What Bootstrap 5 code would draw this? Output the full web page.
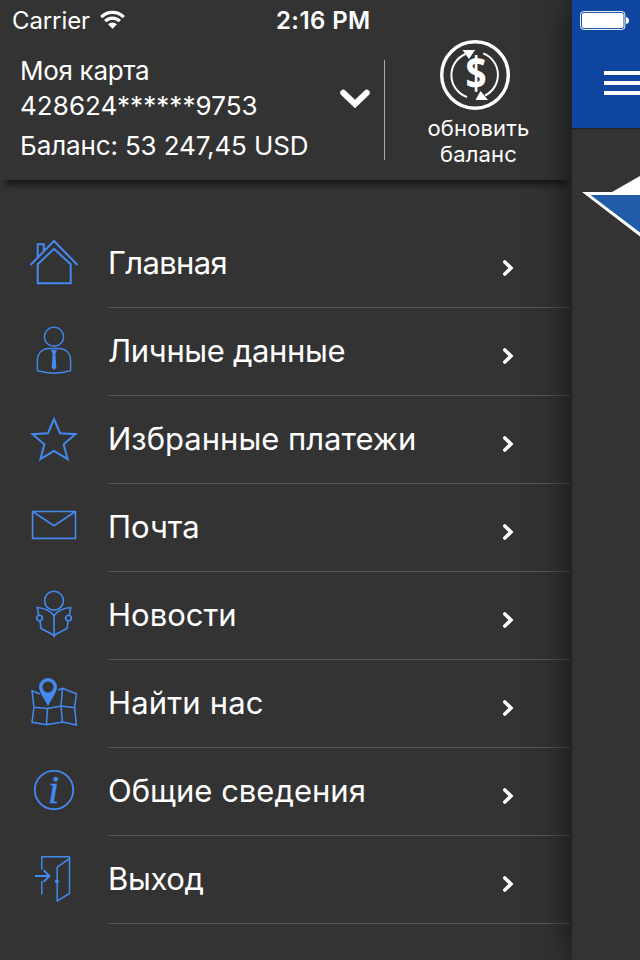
<!DOCTYPE html>
<html lang="ru">
<head>
<meta charset="utf-8">
<meta name="viewport" content="width=device-width, initial-scale=1">
<title>Меню</title>
<link rel="stylesheet" href="https://cdn.jsdelivr.net/npm/bootstrap@5.3.0/dist/css/bootstrap.min.css">
<style>
body{background:#333;color:#fff;font-family:Inter,"Liberation Sans",sans-serif}
.screen{width:640px;height:960px}
.drawer{width:572px}
.drawer-head{height:180px;background:#333;box-shadow:0 9px 7px -5px rgba(0,0,0,.62)}
.status{height:40px;line-height:42px;font-size:24px;padding-left:12px}
.status .carrier{width:87px;letter-spacing:-.1px}
.status .clock{font-weight:600;margin-left:151px;letter-spacing:.4px}
.account{font-size:26px;line-height:35px;padding:13px 0 0 20px;width:340px}
.account .holder{letter-spacing:-.3px}
.account .number{letter-spacing:.06px}
.account .balance{line-height:46px;letter-spacing:-.13px}
.toggle{width:44px;padding-top:48px}
.rule{width:1px;height:100px;margin-top:20px;background:#aaa}
.refresh{width:187px;font-size:22px;line-height:26px;letter-spacing:.15px}
.refresh svg{margin-right:8px}
.menu{padding-top:40px}
.menu-row{height:88px;color:#fff;text-decoration:none}
.menu-row .pic{width:60px;margin-left:24px;margin-right:24px;fill:none;stroke:#4489f0;stroke-width:2}
.menu-row .caption{border-bottom:1px solid #555;font-size:31px;line-height:86px;width:462px;margin-right:2px}
.menu-row .go{margin:38px 55px 0 0}
.menu-row .tight{letter-spacing:-.35px}
.menu-row .tighter{letter-spacing:-.65px}
.menu-row .loose{letter-spacing:.15px}
.side{width:68px;background:#333;box-shadow:0 0 40px rgba(0,0,0,.7)}
.side-bar{height:128px;background:#0e469f;padding-top:10px}
.burger{width:36px;margin-top:40px}
.burger span{height:4px;margin-bottom:6px;background:#fff}
svg{display:block}
</style>
</head>
<body>
<svg width="0" height="0" class="position-absolute"><symbol id="next" viewBox="0 0 14 20"><path d="M3.800 3.900L10 10l-6.200 6.100" fill="none" stroke="#fff" stroke-width="3.500" stroke-linecap="round"/></symbol></svg>
<div class="screen d-flex overflow-hidden">
  <div class="drawer flex-shrink-0">
    <header class="drawer-head position-relative">
      <div class="status d-flex text-nowrap">
        <span class="carrier">Carrier</span>
        <svg width="26" height="40" viewBox="0 0 26 40" fill="none" stroke="#fff" stroke-width="3.300"><path d="M2.200 17.200a15.800 15.800 0 0 1 22.600 0M6.200 21.200a10.200 10.200 0 0 1 14.600 0"/><path d="M13.500 28.800L9 24.300a6.400 6.400 0 0 1 9 0z" fill="#fff" stroke="none"/></svg>
        <span class="clock">2:16 PM</span>
      </div>
      <div class="d-flex text-nowrap">
        <div class="account">
          <div class="holder">Моя карта</div>
          <div class="number">428624******9753</div>
          <div class="balance">Баланс: 53 247,45 USD</div>
        </div>
        <div class="toggle"><svg width="30" height="22" viewBox="340 88 30 22"><path d="M343.200 92.800L355 104l11.800-11.200" fill="none" stroke="#fff" stroke-width="6" stroke-linecap="round"/></svg></div>
        <div class="rule"></div>
        <div class="refresh d-flex flex-column align-items-center text-center">
          <svg width="72" height="75" viewBox="439 40 72 75" fill="none" stroke="#fff">
            <circle cx="475" cy="75" r="33.300" stroke-width="3.400"/>
            <path d="M467 97a23 23 0 0 1-1.500-43M483.300 53.400A23 23 0 0 1 485 95.500" stroke-width="2"/>
            <path d="M462.500 50H475l-6 9zM488 100h-12.500l5-9z" fill="#fff" stroke="none"/>
            <text transform="translate(476 88.500) scale(.88 1.050)" text-anchor="middle" font-family="Open Sans" font-weight="700" font-size="42" letter-spacing="0" fill="#fff" stroke="none">$</text>
          </svg>
          <div>обновить</div>
          <div>баланс</div>
        </div>
      </div>
    </header>
    <nav class="menu text-nowrap">
      <a class="menu-row d-flex" href="#"><svg class="pic" height="88" viewBox="24 0 60 88"><path d="M30.500 45L54 21l23.500 24M37.700 38V24.200h6.100v6.500M37.700 44.300v19h33v-19L54 28.800z"/></svg>
        <span class="caption d-flex"><span class="tighter">Главная</span><svg class="go ms-auto" width="14" height="20"><use href="#next"/></svg></span></a>
      <a class="menu-row d-flex" href="#"><svg class="pic" height="88" viewBox="24 0 60 88"><g stroke-width="1.400"><circle cx="54" cy="28.700" r="9.600"/><path d="M49 40.500h10c7 0 11.600 5 11.600 12v10.200q-16.600 5-33.200 0V52.500c0-7 4.600-12 11.600-12z"/></g><path d="M51 42h6l-1.600 4 .9 13.800-2.300 2.200-2.300-2.200.9-13.800z" fill="#4489f0" stroke="none"/></svg>
        <span class="caption d-flex"><span class="tight">Личные данные</span><svg class="go ms-auto" width="14" height="20"><use href="#next"/></svg></span></a>
      <a class="menu-row d-flex" href="#"><svg class="pic" height="88" viewBox="24 0 60 88"><path d="M54 23l6 14.200 15.500 1L63.600 48.300l4 14.700L54 54.800 40.400 63l4-14.700L32.500 38.200l15.500-1z"/></svg>
        <span class="caption d-flex"><span>Избранные платежи</span><svg class="go ms-auto" width="14" height="20"><use href="#next"/></svg></span></a>
      <a class="menu-row d-flex" href="#"><svg class="pic" height="88" viewBox="24 0 60 88"><path d="M32.600 27.500h42.900v26.900H32.600zL54 41.700l21.500-14.200" stroke-width="1.600"/></svg>
        <span class="caption d-flex"><span>Почта</span><svg class="go ms-auto" width="14" height="20"><use href="#next"/></svg></span></a>
      <a class="menu-row d-flex" href="#"><svg class="pic" height="88" viewBox="24 0 60 88"><g stroke-width="1.600"><circle cx="54" cy="28.700" r="9.400"/><circle cx="39.500" cy="46" r="2.800"/><circle cx="68.500" cy="46" r="2.800"/><path d="M38.600 43.200l-1.200-7.700Q49 36.500 54 43.700 59 36.500 70.600 35.500l-1.200 7.700M54 43.700V64l-1.500-1.500-11.500-6-1-7.600M54 64l1.500-1.500 11.500-6 1-7.600"/></g></svg>
        <span class="caption d-flex"><span>Новости</span><svg class="go ms-auto" width="14" height="20"><use href="#next"/></svg></span></a>
      <a class="menu-row d-flex" href="#"><svg class="pic" height="88" viewBox="24 0 60 88"><path d="M40 34l-8-3.300 2 16.600-2 15 14.500 2.400 16-2.700 14 3-2-17.300 2-13.900-14-5.500-4.200 1.700M62.500 28.300L61 46l1.500 16M34 47.300l13.500 1.200L61 46l13.500 1.700M47.500 48.500l-1 16" stroke-width="1.500"/><path fill-rule="evenodd" d="M48 46.500c-1.500-5-9-13.500-9-19.500a9 9 0 0 1 18 0c0 6-7.500 14.500-9 19.500zM48 21.500a5.500 5.500 0 1 0 0 11 5.500 5.500 0 0 0 0-11z" fill="#4489f0" stroke="none"/></svg>
        <span class="caption d-flex"><span class="loose">Найти нас</span><svg class="go ms-auto" width="14" height="20"><use href="#next"/></svg></span></a>
      <a class="menu-row d-flex" href="#"><svg class="pic" height="88" viewBox="24 0 60 88"><circle cx="54" cy="42" r="19.200" stroke-width="1.800"/><text x="53.500" y="54.500" text-anchor="middle" font-family="Liberation Serif" font-style="italic" font-size="40" fill="#4489f0" stroke-width=".5">i</text></svg>
        <span class="caption d-flex"><span>Общие сведения</span><svg class="go ms-auto" width="14" height="20"><use href="#next"/></svg></span></a>
      <a class="menu-row d-flex" href="#"><svg class="pic" height="88" viewBox="24 0 60 88"><path d="M41.800 33.500V20.700h27.700v36.800L57.200 65V31.200l12.300-8.500M41.800 45v13.500" stroke-width="1.500"/><path d="M35 40h15M43.700 34.200l5.800 5.800-5.800 5.800"/><circle cx="56.800" cy="45.300" r="1.900" fill="#4489f0" stroke="none"/></svg>
        <span class="caption d-flex"><span class="tight">Выход</span><svg class="go ms-auto" width="14" height="20"><use href="#next"/></svg></span></a>
    </nav>
  </div>
  <aside class="side flex-shrink-0 position-relative">
    <div class="side-bar d-flex flex-column">
      <svg class="ms-2" width="52" height="21" viewBox="580 10 52 21"><rect x="580.600" y="11.600" width="44.300" height="17.800" rx="3" fill="none" stroke="#fff"/><rect x="582" y="13" width="41.500" height="15" rx="1.600" fill="#fff"/><path d="M626 17q3 .5 3 3.500t-3 3.500z" fill="#fff"/></svg>
      <div class="burger ms-auto d-flex flex-column"><span></span><span></span><span></span></div>
    </div>
    <svg width="68" height="112" viewBox="572 128 68 112"><path d="M572 128.500h68" stroke="#222"/><path d="M582 192h30l28-16v60.500z" fill="#fff"/><path d="M590.500 195H640v37.500z" fill="#205ca8"/></svg>
  </aside>
</div>
<script src="https://cdn.jsdelivr.net/npm/bootstrap@5.3.0/dist/js/bootstrap.bundle.min.js"></script>
</body>
</html>
